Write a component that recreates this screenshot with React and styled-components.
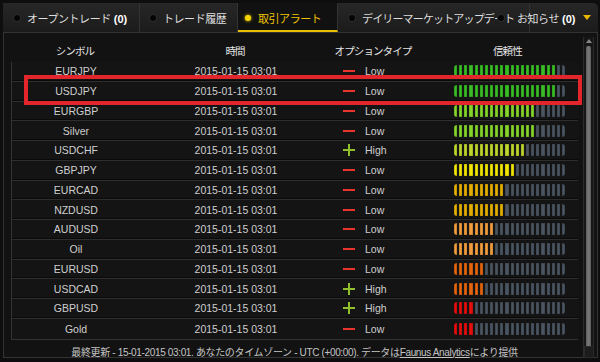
import React from "react"
import styled, { createGlobalStyle } from "styled-components"

const GlobalStyle = createGlobalStyle`
  html, body {
    margin: 0;
    padding: 0;
    background: #0e0e0e;
  }
  body {
    font-family: "Liberation Sans", "Noto Sans CJK JP", sans-serif;
  }
`

const Frame = styled.div`
  width: 600px;
  height: 362px;
  box-sizing: border-box;
  padding: 3px 2px 4px 3px;
  display: flex;
  flex-direction: column;
  background: #0e0e0e;
  position: relative;
  overflow: hidden;
`

const TabBar = styled.div`
  display: flex;
  height: 30px;
  box-sizing: border-box;
  background: linear-gradient(#272727, #1b1b1b);
  border-bottom: 1px solid #333;
  border-radius: 0 5px 0 0;
  font-size: 11px;
`

const Tab = styled.div`
  position: relative;
  display: flex;
  align-items: center;
  gap: 7px;
  box-sizing: border-box;
  flex: 0 0 ${(p) => p.$width}px;
  min-width: 0;
  margin-left: ${(p) => p.$shift || 0}px;
  padding-left: ${(p) => p.$pad || 10}px;
  white-space: nowrap;
  letter-spacing: ${(p) => (p.$tight ? "-0.85px" : "-0.45px")};
  color: ${(p) => (p.$active ? "#f0c400" : "#dedede")};
  background: ${(p) => (p.$active ? "#111" : "transparent")};
  border-right: ${(p) => (p.$noSep ? "none" : "1px solid #333")};
  border-bottom: ${(p) => (p.$active ? "2px solid #e8c000" : "none")};
  padding-top: ${(p) => (p.$active ? "2px" : "0")};
  z-index: ${(p) => (p.$front ? 2 : 1)};
`

const Dot = styled.span`
  flex: 0 0 auto;
  width: 6px;
  height: 6px;
  border-radius: 50%;
  background: ${(p) => (p.$active ? "#f7d400" : "#050505")};
  box-shadow: ${(p) => (p.$active ? "0 0 3px #f7d400" : "0 0 0 1px #2c2c2c")};
`

const Count = styled.b`
  margin-left: 3px;
  color: #fff;
  letter-spacing: 0;
`

const Caret = styled.span`
  flex: 0 0 auto;
  margin-left: 1px;
  width: 0;
  height: 0;
  border-left: 4px solid transparent;
  border-right: 4px solid transparent;
  border-top: 5px solid #e8b800;
`

const Panel = styled.div`
  flex: 1;
  min-height: 0;
  display: grid;
  grid-template-columns: 567px 11px;
  grid-template-rows: 1fr 18px;
  column-gap: 5px;
  padding: 6px 3px 0 7px;
  border: 1px solid #333;
  border-top: none;
  background: #121212;
`

const Table = styled.div`
  display: flex;
  flex-direction: column;
`

const cols = "128px 192px 84px 1fr"

const HeadRow = styled.div`
  display: grid;
  grid-template-columns: ${cols};
  height: 23px;
  align-items: center;
  color: #e4e4e4;
  font-size: 10.5px;
  letter-spacing: -0.9px;
`

const HeadCell = styled.div`
  text-align: ${(p) => (p.$left ? "left" : "center")};
  padding-left: ${(p) => p.$pad || 0}px;
`

const Rows = styled.div`
  border-left: 1px solid #333;
  border-bottom: 1px solid #333;
`

const Row = styled.div`
  display: grid;
  grid-template-columns: ${cols};
  align-items: center;
  height: 19.75px;
  box-sizing: border-box;
  border-bottom: 1px solid #2e2e2e;
  box-shadow: inset 0 -1px 0 #0a0a0a;
  background: #141414;
  color: #cfcfcf;
  font-size: 10.5px;
  &:last-child {
    border-bottom: none;
    box-shadow: none;
  }
`

const Cell = styled.div`
  text-align: center;
`

const TypeCell = styled.div`
  display: flex;
  align-items: center;
  gap: 9px;
  padding-left: 11px;
`

const BarCell = styled.div`
  padding-left: 38px;
  display: flex;
  align-items: center;
`

const Bar = styled.div`
  display: flex;
  gap: 2px;
  width: 111px;
  height: 12px;
  border-radius: 3px;
  overflow: hidden;
`

const Seg = styled.span`
  flex: 1;
  background: ${(p) => p.$color};
  box-shadow: inset 0 0 0 0.5px rgba(0, 0, 0, 0.25);
`

const ScrollTrack = styled.div`
  grid-row: 1 / span 2;
  grid-column: 2;
  display: flex;
  flex-direction: column;
  align-items: center;
  margin-top: -2px;
  border-left: 1px solid #2c2c2c;
  border-right: 1px solid #2c2c2c;
  background: #161616;
`

const ScrollUp = styled.div`
  margin-top: 2px;
  width: 0;
  height: 0;
  border-left: 3px solid transparent;
  border-right: 3px solid transparent;
  border-bottom: 4px solid #888;
`

const Thumb = styled.div`
  flex: 1;
  margin-top: 3px;
  width: 5px;
  border-radius: 2px 2px 0 0;
  background: linear-gradient(90deg, #5c5c5c, #7a7a7a, #5c5c5c);
`

const ScrollDown = styled.div`
  width: 8px;
  height: 10px;
  background: #1c1c1c;
  border: 1px solid #2a2a2a;
`

const Footer = styled.div`
  grid-column: 1;
  display: flex;
  align-items: flex-end;
  justify-content: center;
  line-height: 11px;
  color: #c4c4c4;
  font-size: 10px;
  letter-spacing: -0.35px;
  white-space: nowrap;
  a {
    color: #c4c4c4;
    text-decoration: underline;
  }
`

const Highlight = styled.div`
  position: absolute;
  left: 24px;
  top: 75px;
  width: 558px;
  height: 30px;
  box-sizing: border-box;
  border: 4px solid #e3262b;
  pointer-events: none;
`

const Minus = () => (
  <svg width="13" height="12" viewBox="0 0 13 12">
    <rect x="0" y="5" width="12" height="2" fill="#e8342c" />
  </svg>
)

const Plus = () => (
  <svg width="13" height="12" viewBox="0 0 13 12">
    <rect x="0" y="5" width="12" height="2" fill="#8fbf2a" />
    <rect x="5" y="0" width="2" height="12" fill="#8fbf2a" />
  </svg>
)

const rows = [
  ["EURJPY", "Low", 20, "#38bd24"],
  ["USDJPY", "Low", 20, "#38bd24"],
  ["EURGBP", "Low", 16, "#84d42a"],
  ["Silver", "Low", 16, "#84d42a"],
  ["USDCHF", "High", 14, "#bed62c"],
  ["GBPJPY", "Low", 12, "#f0e600"],
  ["EURCAD", "Low", 10, "#e4ae00"],
  ["NZDUSD", "Low", 10, "#e4ae00"],
  ["AUDUSD", "Low", 8, "#f09c3c"],
  ["Oil", "Low", 8, "#f09c3c"],
  ["EURUSD", "Low", 6, "#e4640c"],
  ["USDCAD", "High", 6, "#e4640c"],
  ["GBPUSD", "High", 4, "#e60d0d"],
  ["Gold", "Low", 4, "#e60d0d"],
]

const SEGMENTS = 22

export default function App() {
  return (
    <>
      <GlobalStyle />
      <Frame>
        <TabBar>
          <Tab $width={137} $pad={11}>
            <Dot />
            <span>
              オープントレード<Count>(0)</Count>
            </span>
          </Tab>
          <Tab $width={98} $pad={10}>
            <Dot />
            トレード履歴
          </Tab>
          <Tab $width={100} $pad={7} $active>
            <Dot $active />
            取引アラート
          </Tab>
          <Tab $width={192} $pad={11} $tight>
            <Dot />
            デイリーマーケットアップデート
          </Tab>
          <Tab $width={107} $shift={-40} $pad={8} $noSep $front>
            <Dot />
            <span style={{ marginLeft: 6 }}>
              お知らせ<Count>(0)</Count>
            </span>
            <Caret />
          </Tab>
        </TabBar>
        <Panel>
          <Table>
            <HeadRow>
              <HeadCell>シンボル</HeadCell>
              <HeadCell>時間</HeadCell>
              <HeadCell>オプションタイプ</HeadCell>
              <HeadCell $left $pad={78}>
                信頼性
              </HeadCell>
            </HeadRow>
            <Rows>
              {rows.map(([sym, type, level, color]) => (
                <Row key={sym}>
                  <Cell>{sym}</Cell>
                  <Cell>2015-01-15 03:01</Cell>
                  <TypeCell>
                    {type === "High" ? <Plus /> : <Minus />}
                    {type}
                  </TypeCell>
                  <BarCell>
                    <Bar>
                      {Array.from({ length: SEGMENTS }, (_, i) => (
                        <Seg key={i} $color={i < level ? color : "#4a5561"} />
                      ))}
                    </Bar>
                  </BarCell>
                </Row>
              ))}
            </Rows>
          </Table>
          <ScrollTrack>
            <ScrollUp />
            <Thumb />
            <ScrollDown />
          </ScrollTrack>
          <Footer>
            最終更新 - 15-01-2015 03:01. あなたのタイムゾーン - UTC (+00:00).
            データは<a>Faunus Analytics</a>により提供
          </Footer>
        </Panel>
        <Highlight />
      </Frame>
    </>
  )
}
